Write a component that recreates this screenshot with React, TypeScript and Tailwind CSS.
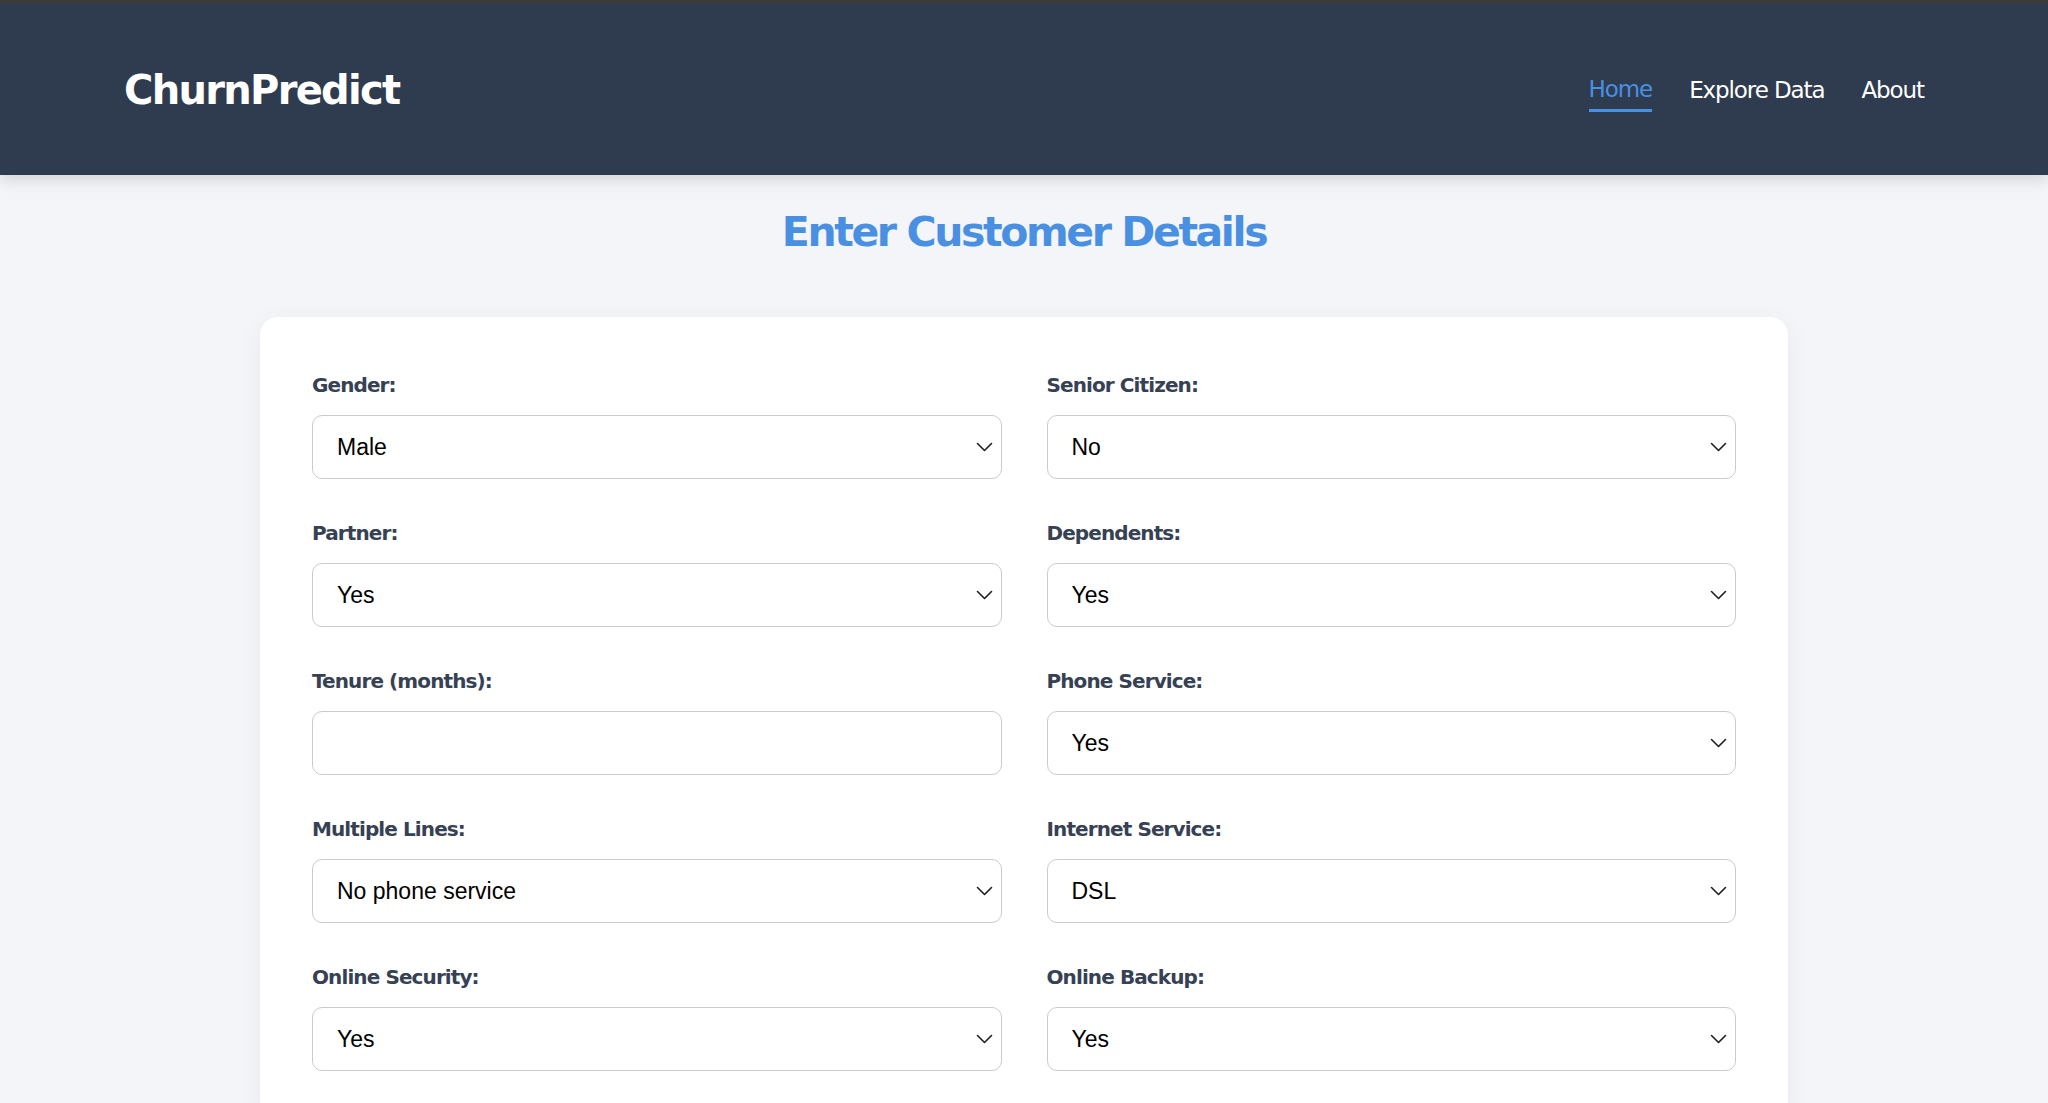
import { useState } from 'react';

type Field =
  | { kind: 'select'; label: string; name: string; options: string[] }
  | { kind: 'number'; label: string; name: string };

const yesNo = ['Yes', 'No'];
const yesNoService = ['Yes', 'No', 'No internet service'];

const fields: Field[] = [
  { kind: 'select', label: 'Gender:', name: 'gender', options: ['Male', 'Female'] },
  { kind: 'select', label: 'Senior Citizen:', name: 'senior', options: ['No', 'Yes'] },
  { kind: 'select', label: 'Partner:', name: 'partner', options: yesNo },
  { kind: 'select', label: 'Dependents:', name: 'dependents', options: yesNo },
  { kind: 'number', label: 'Tenure (months):', name: 'tenure' },
  { kind: 'select', label: 'Phone Service:', name: 'phone', options: yesNo },
  { kind: 'select', label: 'Multiple Lines:', name: 'lines', options: ['No phone service', 'Yes', 'No'] },
  { kind: 'select', label: 'Internet Service:', name: 'internet', options: ['DSL', 'Fiber optic', 'No'] },
  { kind: 'select', label: 'Online Security:', name: 'security', options: yesNoService },
  { kind: 'select', label: 'Online Backup:', name: 'backup', options: yesNoService },
];

const heading = { fontFamily: '"DejaVu Sans", Verdana, sans-serif' };
const body = { fontFamily: '"Liberation Sans", Arial, sans-serif' };

function Chevron() {
  return (
    <svg
      className="pointer-events-none absolute right-[9px] top-1/2 -translate-y-1/2"
      width="17"
      height="10"
      viewBox="0 0 17 10"
      fill="none"
    >
      <path d="M1.5 1.5 L8.5 8.5 L15.5 1.5" stroke="#1f1f1f" strokeWidth="1.6" strokeLinecap="round" strokeLinejoin="round" />
    </svg>
  );
}

export default function App() {
  const [values, setValues] = useState<Record<string, string>>({});

  const set = (name: string, v: string) => setValues((prev) => ({ ...prev, [name]: v }));

  return (
    <div className="min-h-screen bg-[#f4f5f9]">
      <div className="h-[4px] bg-[#3c3d3f]" />
      <header className="h-[171px] bg-[#2f3b4e] shadow-[0_6px_14px_rgba(0,0,0,0.12)] px-[124px] flex items-center justify-between relative z-10">
        <h1 className="text-white font-bold text-[40px] tracking-[-1.7px] leading-none" style={heading}>
          ChurnPredict
        </h1>
        <nav className="flex items-center gap-[37px] text-[23px] tracking-[-1.1px] leading-none pt-[1px]" style={heading}>
          <a className="text-[#4a90e2] border-b-[3px] border-[#4a90e2] pt-[9px] pb-[8px]">Home</a>
          <a className="text-white">Explore Data</a>
          <a className="text-white">About</a>
        </nav>
      </header>

      <main className="px-[260px] pb-[60px]">
        <h2
          className="text-center text-[#4a90e2] font-bold text-[41px] tracking-[-2.4px] leading-[50px] mt-[32px] mb-[60px]"
          style={heading}
        >
          Enter Customer Details
        </h2>

        <form className="bg-white rounded-[18px] shadow-[0_4px_24px_rgba(0,0,0,0.05)] px-[52px] pt-[55px] pb-[52px]">
          <div className="grid grid-cols-2 gap-x-[45px] gap-y-[41px]">
            {fields.map((f) => (
              <div key={f.name} className="flex flex-col gap-[17px]">
                <label className="text-[20px] leading-[26px] font-bold text-[#364153] tracking-[-0.9px]" style={heading}>
                  {f.label}
                </label>
                {f.kind === 'select' ? (
                  <div className="relative">
                    <select
                      value={values[f.name] ?? f.options[0]}
                      onChange={(e) => set(f.name, e.target.value)}
                      className="appearance-none w-full h-[64px] rounded-[10px] border border-[#cbcbcb] bg-white pl-[24px] pr-[40px] text-[23px] text-black outline-none"
                      style={body}
                    >
                      {f.options.map((o) => (
                        <option key={o}>{o}</option>
                      ))}
                    </select>
                    <Chevron />
                  </div>
                ) : (
                  <input
                    type="number"
                    value={values[f.name] ?? ''}
                    onChange={(e) => set(f.name, e.target.value)}
                    className="w-full h-[64px] rounded-[10px] border border-[#cbcbcb] bg-white px-[24px] text-[23px] text-black outline-none"
                    style={body}
                  />
                )}
              </div>
            ))}
          </div>
        </form>
      </main>
    </div>
  );
}
